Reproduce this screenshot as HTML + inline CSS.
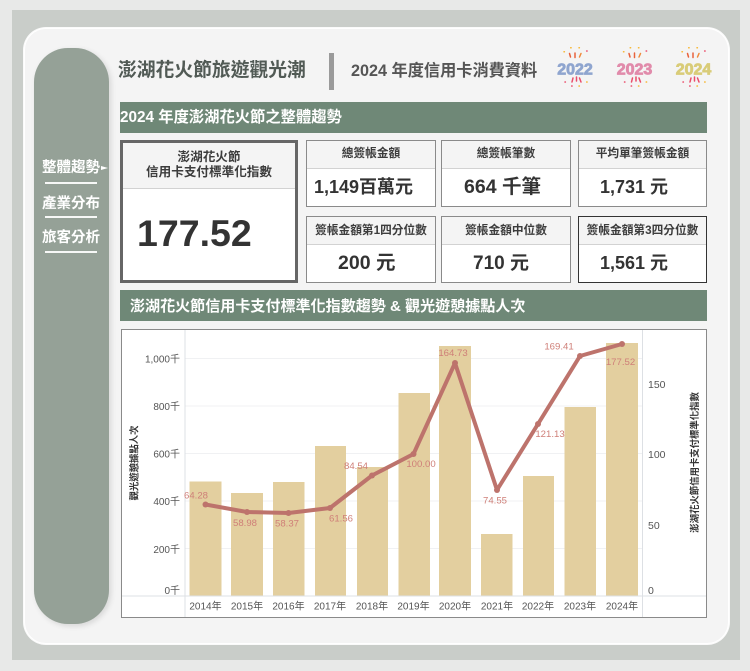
<!DOCTYPE html>
<html lang="zh-Hant"><head><meta charset="utf-8">
<style>
html,body{margin:0;padding:0;background:#e8e9e8}
#p{position:relative;width:750px;height:671px;overflow:hidden;background:#e8e9e8;font-family:"Liberation Sans","Noto Sans CJK TC",sans-serif;color:#333;filter:blur(.3px)}
#p div{position:absolute;box-sizing:border-box}
.t{white-space:nowrap;text-align:center;line-height:1}
.box{background:#fff;border:1px solid #8a8a8a}
.hd{left:0;top:0;right:0;background:#f4f4f4;border-bottom:1px solid #d2d2d2}
.l{left:0;right:0;top:7px;font-size:11.7px;font-weight:700;color:#3c3c3c}
.v{top:37px;font-size:18px;font-weight:700}
.nav{left:42px;width:60px;color:#fff;font-size:14.5px;font-weight:700;line-height:1;white-space:nowrap}
.rule{left:45px;width:52px;height:2px;background:rgba(255,255,255,.92)}
</style></head><body>
<div id="p">
<div style="left:12px;top:10px;width:728px;height:650px;background:#c9cdc9"></div>
<div style="left:24px;top:28px;width:705px;height:616px;background:#f4f4f4;border-radius:22px;border:1px solid #fff;box-shadow:0 0 0 1px #fafafa"></div>
<div style="left:34px;top:48px;width:75px;height:576px;background:#95a197;border-radius:34px;box-shadow:2px 2px 6px rgba(0,0,0,.12)"></div>

<div class="nav" style="top:161px">整體趨勢</div>
<div style="left:101px;top:166px;width:0;height:0;border-left:7px solid #fff;border-top:2.500px solid transparent;border-bottom:2.500px solid transparent"></div>
<div class="rule" style="top:182px"></div>
<div class="nav" style="top:196.500px">產業分布</div>
<div class="rule" style="top:216px"></div>
<div class="nav" style="top:231px">旅客分析</div>
<div class="rule" style="top:251px"></div>

<div class="t" style="left:118px;top:61px;font-size:18.800px;font-weight:700;color:#515a55">澎湖花火節旅遊觀光潮</div>
<div style="left:329px;top:53px;width:5px;height:37px;background:#9a9a9a"></div>
<div class="t" style="left:351px;top:63px;font-size:16.200px;font-weight:700;color:#555">2024 年度信用卡消費資料</div>

<svg style="position:absolute;left:0;top:0" width="750" height="120" viewBox="0 0 750 120">
<defs><g id="fw" fill="none" stroke-width="1.500" stroke-linecap="round">
<path d="M-11 51.700h.4M-4.300 47.700h.4M4 47.700h.4" stroke="#f7b733"/>
<path d="M11.700 51h.4" stroke="#ea4d6a"/>
<path d="M-5.500 53.500l1 3.500M0 53v4.500" stroke="#e8623c"/><path d="M6 53.500l-1.500 3.500" stroke="#f08a3c"/>
<path d="M-3 82l1-4M1.500 77v4M6 82l-1.500-4" stroke="#ea4d6a"/>
<path d="M-10 82h.4M-3.300 86h.4" stroke="#ea4d6a"/><path d="M11.700 82h.4M4 86h.4" stroke="#f7b733"/>
</g></defs>
<use href="#fw" x="575"/><use href="#fw" x="634.500"/><use href="#fw" x="693"/>
<g font-family="Liberation Sans,sans-serif" font-weight="700" font-size="16" text-anchor="middle" stroke-width=".8">
<text x="575" y="74.500" fill="#8fa5cf" stroke="#8fa5cf">2022</text>
<text x="634.500" y="74.500" fill="#e18bab" stroke="#e18bab">2023</text>
<text x="693.500" y="74.500" fill="#d9cc78" stroke="#d9cc78">2024</text>
</g>
</svg>

<div style="left:120px;top:102px;width:587px;height:31px;background:#6f8877"></div>
<div class="t" style="left:120px;top:110px;font-size:15.300px;font-weight:700;color:#fff">2024 年度澎湖花火節之整體趨勢</div>

<div class="box" style="left:120px;top:140px;width:178px;height:143px;border:3px solid #666">
 <div class="hd" style="height:46px"></div>
 <div class="t" style="left:0;right:0;top:6.500px;font-size:12.600px;font-weight:700;line-height:15px;color:#3c3c3c">澎湖花火節<br>信用卡支付標準化指數</div>
 <div class="t" style="left:14px;top:72px;font-size:37.500px;font-weight:700;color:#333">177.52</div>
</div>

<div class="box" style="left:306px;top:140px;width:130px;height:67px"><div class="hd" style="height:28px"></div><div class="t l">總簽帳金額</div><div class="t v" style="left:7px">1,149百萬元</div></div>
<div class="box" style="left:441px;top:140px;width:130px;height:67px"><div class="hd" style="height:28px"></div><div class="t l">總簽帳筆數</div><div class="t v" style="left:22px;font-size:19.500px;top:37px">664 千筆</div></div>
<div class="box" style="left:578px;top:140px;width:129px;height:67px"><div class="hd" style="height:28px"></div><div class="t l">平均單筆簽帳金額</div><div class="t v" style="left:21px">1,731 元</div></div>

<div class="box" style="left:306px;top:216px;width:130px;height:67px"><div class="hd" style="height:28px"></div><div class="t l" style="top:7.500px">簽帳金額第1四分位數</div><div class="t v" style="left:31px;font-size:19.500px;top:36.500px">200 元</div></div>
<div class="box" style="left:441px;top:216px;width:130px;height:67px"><div class="hd" style="height:28px"></div><div class="t l" style="top:7.500px">簽帳金額中位數</div><div class="t v" style="left:31px;font-size:19px;top:36.500px">710 元</div></div>
<div class="box" style="left:578px;top:216px;width:129px;height:67px;border-color:#333"><div class="hd" style="height:28px"></div><div class="t l" style="top:7.500px">簽帳金額第3四分位數</div><div class="t v" style="left:21px">1,561 元</div></div>

<div style="left:120px;top:290px;width:587px;height:31px;background:#6f8877"></div>
<div class="t" style="left:130px;top:299px;font-size:15.050px;font-weight:700;color:#fff">澎湖花火節信用卡支付標準化指數趨勢 &amp; 觀光遊憩據點人次</div>

<svg style="position:absolute;left:0;top:0" width="750" height="671" viewBox="0 0 750 671" font-family="Liberation Sans,Noto Sans CJK TC,sans-serif">
<rect x="121.500" y="329.500" width="585" height="288" fill="#fff" stroke="#8a8a8a"/>
<g stroke="#f0f1f3" fill="none"><path d="M185 358.500H642M185 406H642M185 453.500H642M185 501H642M185 548.500H642"/></g>
<path d="M122 596H706" stroke="#dde0e4"/><path d="M185 330V617M642.500 330V617" stroke="#dde0e4"/>
<g fill="#e3cf9f">
<rect x="189.500" y="481.500" width="32" height="114"/><rect x="231" y="493" width="32" height="102.500"/><rect x="273" y="482" width="31.500" height="113.500"/><rect x="315" y="446" width="31" height="149.500"/><rect x="357" y="467" width="31" height="128.500"/><rect x="398.500" y="393" width="31.500" height="202.500"/><rect x="439" y="346" width="32" height="249.500"/><rect x="481" y="534" width="31.500" height="61.500"/><rect x="523" y="476" width="31" height="119.500"/><rect x="564.500" y="407" width="31.500" height="188.500"/><rect x="606" y="343" width="32" height="252.500"/>
</g>
<polyline fill="none" stroke="#bd736c" stroke-width="4" stroke-linejoin="round" points="205.500,504.500 247,512 288.500,513 330,508 372,475.500 413.500,454 455,363 497,490 538,424 580,356 622,344"/>
<g fill="#bd736c"><circle cx="205.500" cy="504.500" r="3"/><circle cx="247" cy="512" r="3"/><circle cx="288.500" cy="513" r="3"/><circle cx="330" cy="508" r="3"/><circle cx="372" cy="475.500" r="3"/><circle cx="413.500" cy="454" r="3"/><circle cx="455" cy="363" r="3"/><circle cx="497" cy="490" r="3"/><circle cx="538" cy="424" r="3"/><circle cx="580" cy="356" r="3"/><circle cx="622" cy="344" r="3"/></g>
<g fill="#cf7f78" font-size="9.600" text-anchor="middle">
<text x="196" y="498.500">64.28</text><text x="245" y="526">58.98</text><text x="287" y="526.500">58.37</text><text x="341" y="521.500">61.56</text><text x="356" y="469">84.54</text><text x="421" y="467">100.00</text><text x="453" y="356">164.73</text><text x="495" y="503.500">74.55</text><text x="550" y="437">121.13</text><text x="559" y="349.500">169.41</text><text x="620.500" y="365">177.52</text>
</g>
<g fill="#555" font-size="10" text-anchor="end">
<text x="180" y="362.500">1,000千</text><text x="180" y="410">800千</text><text x="180" y="457.500">600千</text><text x="180" y="505">400千</text><text x="180" y="553">200千</text><text x="180" y="594">0千</text>
</g>
<g fill="#555" font-size="10.500" text-anchor="start">
<text x="648" y="388">150</text><text x="648" y="458">100</text><text x="648" y="529">50</text><text x="648" y="594">0</text>
</g>
<g fill="#555" font-size="10" text-anchor="middle">
<text x="205.500" y="609.500">2014年</text><text x="247" y="609.500">2015年</text><text x="288.500" y="609.500">2016年</text><text x="330" y="609.500">2017年</text><text x="372" y="609.500">2018年</text><text x="413.500" y="609.500">2019年</text><text x="455" y="609.500">2020年</text><text x="497" y="609.500">2021年</text><text x="538" y="609.500">2022年</text><text x="580" y="609.500">2023年</text><text x="622" y="609.500">2024年</text>
</g>
<text transform="translate(137.500,463) rotate(-90)" text-anchor="middle" font-size="9.400" font-weight="700" fill="#333">觀光遊憩據點人次</text>
<text transform="translate(698,462.500) rotate(-90)" text-anchor="middle" font-size="9.400" font-weight="700" fill="#333">澎湖花火節信用卡支付標準化指數</text>
</svg>
</div>
</body></html>
